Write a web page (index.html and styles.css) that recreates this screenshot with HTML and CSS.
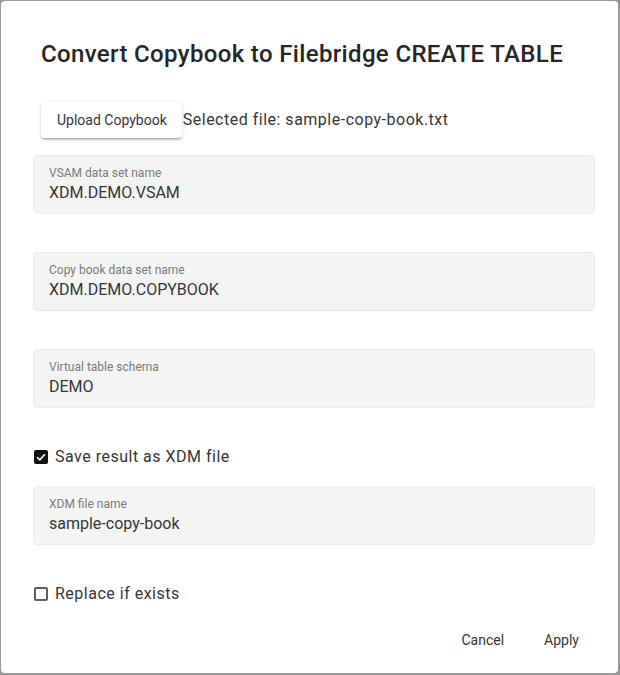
FILE: index.html
```html
<!DOCTYPE html>
<html>
<head>
<meta charset="utf-8">
<link rel="stylesheet" href="styles.css">
</head>
<body>
<div class="dialog">
  <h1 class="title">Convert Copybook to Filebridge CREATE TABLE</h1>
  <div class="upload-row">
    <button class="raised-btn">Upload Copybook</button>
    <span class="selected">Selected file: sample-copy-book.txt</span>
  </div>
  <div class="field first">
    <div class="label">VSAM data set name</div>
    <div class="value">XDM.DEMO.VSAM</div>
  </div>
  <div class="field">
    <div class="label">Copy book data set name</div>
    <div class="value">XDM.DEMO.COPYBOOK</div>
  </div>
  <div class="field">
    <div class="label">Virtual table schema</div>
    <div class="value">DEMO</div>
  </div>
  <div class="check-row">
    <span class="box checked">
      <svg viewBox="0 0 14 14" width="14" height="14"><path d="M3.2 7.2 L5.8 9.8 L10.9 4.3" fill="none" stroke="#fff" stroke-width="1.6"/></svg>
    </span>
    <span class="check-label">Save result as XDM file</span>
  </div>
  <div class="field after-check">
    <div class="label">XDM file name</div>
    <div class="value">sample-copy-book</div>
  </div>
  <div class="check-row">
    <span class="box"></span>
    <span class="check-label">Replace if exists</span>
  </div>
  <div class="actions">
    <button class="flat-btn">Cancel</button>
    <button class="flat-btn">Apply</button>
  </div>
</div>
</body>
</html>
```
FILE: styles.css
```css
html, body {
  margin: 0;
  padding: 0;
}
body {
  background: #9a9a9a;
  width: 620px;
  height: 675px;
  overflow: hidden;
  font-family: Roboto, "Liberation Sans", sans-serif;
}
.dialog {
  margin: 1px 0 0 1px;
  width: 617px;
  height: 672px;
  box-sizing: border-box;
  background: #fff;
  border-radius: 4px;
  padding: 37px 23px 0 32px;
  display: flex;
  flex-direction: column;
}
.title {
  margin: 0 0 0 8px;
  font-size: 24px;
  line-height: 32px;
  font-weight: 500;
  letter-spacing: 0.35px;
  color: #262626;
}
.upload-row {
  margin-top: 32px;
  display: flex;
  align-items: center;
  padding-left: 8px;
}
.raised-btn {
  height: 36px;
  padding: 0 15px 0 16px;
  border: none;
  border-radius: 4px;
  background: #fff;
  font-family: inherit;
  font-size: 14px;
  color: #363636;
  box-shadow: 0 3px 1px -2px rgba(0,0,0,.2), 0 2px 2px 0 rgba(0,0,0,.14), 0 1px 5px 0 rgba(0,0,0,.12);
}
.selected {
  margin-left: 1px;
  font-size: 16px;
  letter-spacing: 0.5px;
  color: #363636;
  position: relative;
  top: -1px;
}
.field {
  margin-top: 38px;
  height: 59px;
  box-sizing: border-box;
  padding: 9px 15px 0;
  background: #f4f4f4;
  border: 1px solid #ececec;
  border-radius: 4px;
}
.field.first {
  margin-top: 17px;
}
.field.after-check {
  margin-top: 19px;
}
.label {
  font-size: 12px;
  line-height: 16px;
  color: #7a7a7a;
}
.value {
  margin-top: 2px;
  font-size: 16px;
  line-height: 20px;
  color: #363636;
}
.check-row {
  margin-top: 39px;
  height: 20px;
  display: flex;
  align-items: center;
}
.box {
  width: 14px;
  height: 14px;
  box-sizing: border-box;
  border: 2px solid #5f5f5f;
  border-radius: 2px;
  margin: 0 7px 0 1px;
  display: flex;
}
.box.checked {
  border: none;
  background: #111;
}
.check-label {
  font-size: 16px;
  letter-spacing: 0.5px;
  color: #363636;
  position: relative;
  top: -1px;
}
.actions {
  margin-top: 18px;
  display: flex;
  justify-content: flex-end;
  gap: 8px;
}
.flat-btn {
  height: 36px;
  min-width: 64px;
  padding: 0 16px;
  border: none;
  background: transparent;
  font-family: inherit;
  font-size: 14px;
  color: #363636;
  border-radius: 4px;
}
```
